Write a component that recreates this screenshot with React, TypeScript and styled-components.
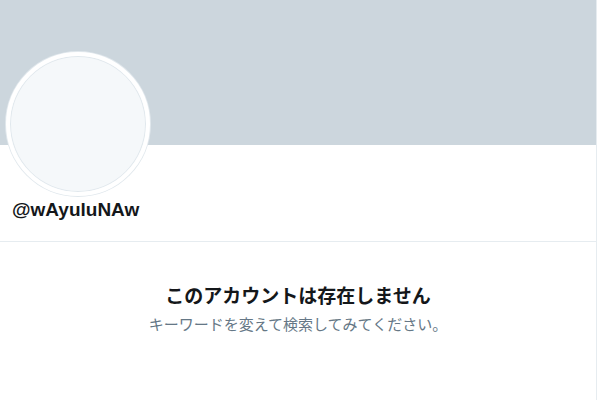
import React from 'react'
import styled, { createGlobalStyle } from 'styled-components'

const GlobalStyle = createGlobalStyle`
  html, body {
    margin: 0;
    padding: 0;
    background: #ffffff;
  }
  body {
    font-family: "Liberation Sans", "Noto Sans CJK JP", sans-serif;
    color: #14171a;
  }
`

const Column = styled.main`
  width: 597px;
  min-height: 400px;
  border-right: 1px solid #e6ecf0;
  box-sizing: border-box;
`

const Banner = styled.div`
  height: 145px;
  background: #ccd6dd;
`

const ProfileHeader = styled.section`
  position: relative;
  height: 97px;
  box-sizing: border-box;
  padding: 53px 12px 0;
  border-bottom: 1px solid #e6ecf0;
`

const Avatar = styled.div`
  position: absolute;
  top: -93px;
  left: 6px;
  width: 144px;
  height: 144px;
  box-sizing: border-box;
  border-radius: 50%;
  border: 4px solid #ffffff;
  background: #f5f8fa;
  box-shadow: 0 0 0 1px #e1e8ed, inset 0 0 0 1px #e1e8ed;
`

const Handle = styled.h2`
  margin: 0;
  font-size: 19px;
  line-height: 24px;
  font-weight: 700;
  color: #14171a;
`

const EmptyState = styled.section`
  display: flex;
  flex-direction: column;
  align-items: center;
  padding-top: 41px;
  gap: 7px;
`

const Title = styled.h1`
  margin: 0;
  font-family: "Noto Sans CJK JP", sans-serif;
  font-size: 19px;
  line-height: 24px;
  font-weight: 700;
  color: #14171a;
`

const Hint = styled.p`
  margin: 0;
  font-family: "Noto Sans CJK JP", sans-serif;
  font-size: 15px;
  line-height: 20px;
  color: #657786;
`

export default function App() {
  return (
    <>
      <GlobalStyle />
      <Column>
        <Banner />
        <ProfileHeader>
          <Avatar />
          <Handle>@wAyuluNAw</Handle>
        </ProfileHeader>
        <EmptyState>
          <Title>このアカウントは存在しません</Title>
          <Hint>キーワードを変えて検索してみてください。</Hint>
        </EmptyState>
      </Column>
    </>
  )
}
